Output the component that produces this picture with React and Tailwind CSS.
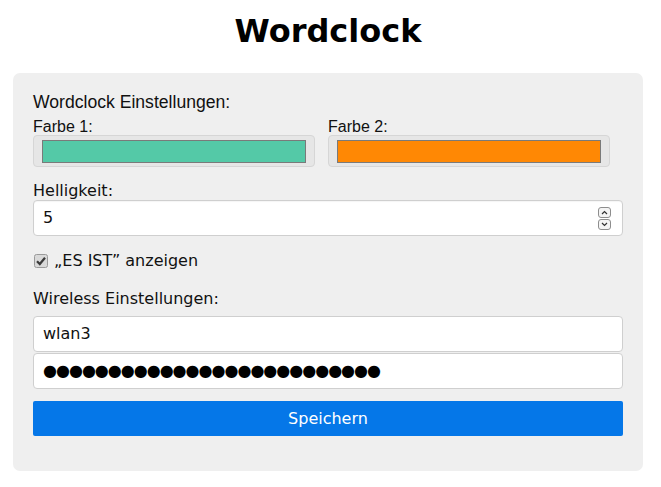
import React from "react";

const dejavu = { fontFamily: '"DejaVu Sans", sans-serif' };

function Spinner() {
  return (
    <div className="flex flex-col gap-[1px] w-[14px]">
      <div className="h-[11px] w-[13px] rounded-[3px] border border-[#8d8d8d] bg-[#f4f4f4] flex items-center justify-center">
        <svg width="7" height="5" viewBox="0 0 7 5"><path d="M1 4 L3.5 1.5 L6 4" fill="none" stroke="#333" strokeWidth="1.2" /></svg>
      </div>
      <div className="h-[11px] w-[13px] rounded-[3px] border border-[#8d8d8d] bg-[#f4f4f4] flex items-center justify-center">
        <svg width="7" height="5" viewBox="0 0 7 5"><path d="M1 1 L3.5 3.5 L6 1" fill="none" stroke="#333" strokeWidth="1.2" /></svg>
      </div>
    </div>
  );
}

function ColorBox({ color }) {
  return (
    <div className="w-[282px] h-[32px] rounded-[4px] border border-[#d6d6d6] bg-[#e6e6e6] pl-[8px] pr-[8px] pt-[4px]">
      <div className="h-[23px] border border-[#7a7a7a]" style={{ backgroundColor: color }} />
    </div>
  );
}

export default function App() {
  return (
    <div className="w-[661px] h-[487px] bg-white text-black overflow-hidden">
      <div className="ml-[13px] w-[630px]">
        <h1 className="mt-[13px] h-[37px] leading-[37px] text-[32px] font-bold text-center" style={dejavu}>
          Wordclock
        </h1>
        <div className="mt-[23px] rounded-[7px] bg-[#efefef] px-[20px] pt-[19px] pb-[35px]">
          <div className="h-[20px] leading-[20px] text-[17.6px] text-[#111]" style={{ fontFamily: '"Liberation Sans", Arial, sans-serif' }}>
            Wordclock Einstellungen:
          </div>
          <div className="grid grid-cols-2" style={{ fontFamily: '"Liberation Sans", Arial, sans-serif' }}>
            <div>
              <div className="mt-[7px] h-[16px] leading-[16px] text-[16px] text-[#111]">Farbe 1:</div>
              <ColorBox color="#54c9a7" />
            </div>
            <div>
              <div className="mt-[7px] h-[16px] leading-[16px] text-[16px] text-[#111]">Farbe 2:</div>
              <ColorBox color="#ff8804" />
            </div>
          </div>
          <div style={dejavu} className="text-[16px] text-[#111]">
            <div className="mt-[15px] h-[18px] leading-[18px]">Helligkeit:</div>
            <div className="h-[36px] rounded-[4px] border border-[#cfcfcf] bg-white flex items-center pl-[9px] pr-[10px] shadow-[inset_0_1px_1px_rgba(0,0,0,0.04)]">
              <span className="flex-1 leading-[18px]">5</span>
              <Spinner />
            </div>
            <div className="mt-[16px] h-[18px] leading-[18px] flex items-center gap-[6px]">
              <svg width="14" height="14" viewBox="0 0 14 14" className="ml-[1px]">
                <rect x="0.5" y="0.5" width="13" height="13" rx="2" fill="#d9d9d9" stroke="#9a9a9a" />
                <path d="M3 7.2 L5.8 10 L11 3.8" fill="none" stroke="#3a3a3a" strokeWidth="2.2" />
              </svg>
              <span>„ES IST” anzeigen</span>
            </div>
            <div className="mt-[20px] h-[18px] leading-[18px]">Wireless Einstellungen:</div>
            <div className="mt-[8px] h-[36px] rounded-[4px] border border-[#cfcfcf] bg-white flex items-center pl-[9px]">
              <span className="leading-[18px]">wlan3</span>
            </div>
            <div className="mt-[1px] h-[36px] rounded-[4px] border border-[#cfcfcf] bg-white flex items-center pl-[9px]">
              <span className="leading-[18px] text-[16px] tracking-[-1px] text-black">●●●●●●●●●●●●●●●●●●●●●●●●●●</span>
            </div>
            <button className="mt-[12px] w-full h-[35px] rounded-[2px] bg-[#0577e8] text-white text-[16px] leading-[18px] flex items-center justify-center" style={dejavu}>
              Speichern
            </button>
          </div>
        </div>
      </div>
    </div>
  );
}
